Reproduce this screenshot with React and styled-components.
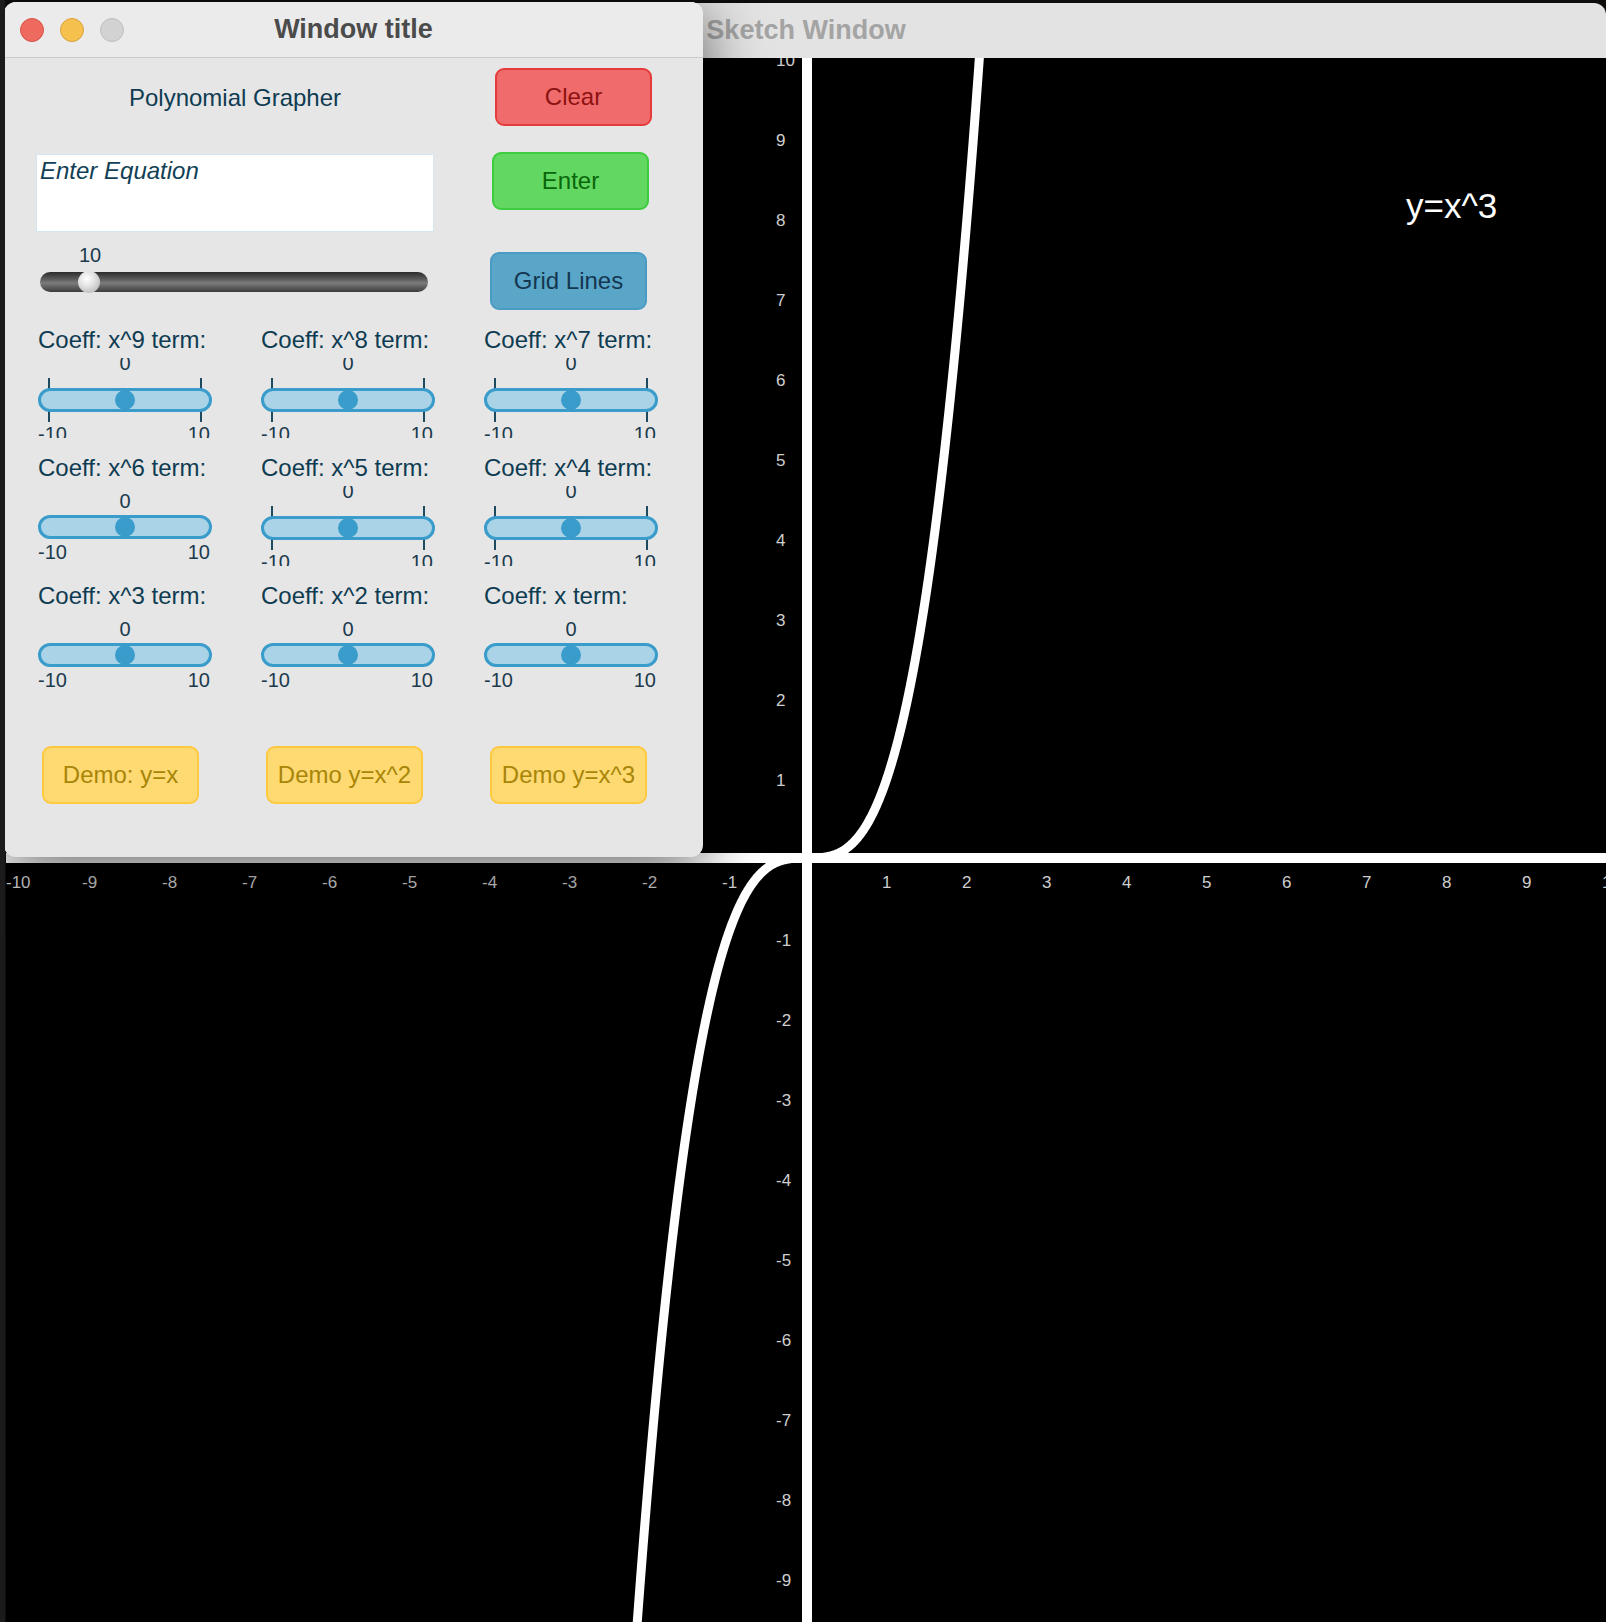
import React from 'react';
import styled, { createGlobalStyle } from 'styled-components';

const GlobalStyle = createGlobalStyle`
  html, body {
    margin: 0;
    padding: 0;
    background: #0e0d0c;
    overflow: hidden;
  }
  body {
    font-family: "Liberation Sans", Arial, sans-serif;
  }
`;

// desktop with two overlapping windows
const Desktop = styled.div`
  position: relative;
  width: 1606px;
  height: 1622px;
  overflow: hidden;
  background: #0e0d0c;
  border-left: 5px solid #1b1b1b;
  box-sizing: border-box;
`;

const SketchWindow = styled.div`
  position: absolute;
  left: 1px;
  top: 3px;
  width: 1600px;
  height: 1660px;
  border-radius: 12px 12px 0 0;
  overflow: hidden;
  background: #000;
`;

const SketchTitleBar = styled.div`
  height: 55px;
  background: #e3e3e3;
  display: flex;
  align-items: center;
  justify-content: center;
  font-weight: bold;
  font-size: 27px;
  color: #a4a4a4;
`;

const ControlWindow = styled.div`
  position: absolute;
  left: -1px;
  top: 2px;
  width: 699px;
  height: 855px;
  border-radius: 12px;
  overflow: hidden;
  background: #e6e6e6;
  box-shadow: 0 12px 60px rgba(0, 0, 0, 0.6);
  z-index: 2;
`;

const TitleBar = styled.div`
  height: 55px;
  background: #ebebeb;
  border-bottom: 1px solid #cbcbcb;
  display: grid;
  grid-template-columns: 1fr auto 1fr;
  align-items: center;
`;

const Lights = styled.div`
  display: flex;
  gap: 16px;
  padding-left: 16px;
`;

const Light = styled.span`
  width: 24px;
  height: 24px;
  border-radius: 50%;
  box-sizing: border-box;
  background: ${(p) => p.$fill};
  border: 1px solid ${(p) => p.$edge};
`;

const WindowTitle = styled.div`
  font-weight: bold;
  font-size: 27px;
  color: #4b4b4b;
`;

const Body = styled.div`
  padding: 10px 0 0 32px;
`;

const TopRow = styled.div`
  display: flex;
  align-items: flex-start;
  gap: 58px;
`;

const LeftColumn = styled.div`
  width: 398px;
  display: flex;
  flex-direction: column;
`;

const AppTitle = styled.div`
  margin-top: 14px;
  line-height: 32px;
  font-size: 24px;
  text-align: center;
  color: #0f3c52;
`;

const EquationInput = styled.textarea`
  margin-top: 40px;
  width: 398px;
  height: 78px;
  box-sizing: border-box;
  border: 1px solid #d3e6f1;
  background: #fff;
  padding: 2px 3px;
  resize: none;
  outline: none;
  font-family: "Liberation Sans", Arial, sans-serif;
  font-style: italic;
  font-size: 24px;
  line-height: 28px;
  color: #123f55;
  &::placeholder {
    color: #123f55;
    opacity: 1;
  }
`;

const RangeValue = styled.div`
  margin-top: 12px;
  padding-left: 43px;
  font-size: 20px;
  line-height: 22px;
  color: #1b3a4e;
`;

const DarkTrack = styled.div`
  position: relative;
  margin: 6px 0 0 4px;
  width: 388px;
  height: 20px;
  border-radius: 10px;
  background: linear-gradient(#2c2c2c 0%, #5a5a5a 35%, #7c7c7c 55%, #3c3c3c 100%);
`;

const DarkKnob = styled.span`
  position: absolute;
  top: -1px;
  left: ${(p) => p.$left}px;
  width: 22px;
  height: 22px;
  border-radius: 50%;
  background: radial-gradient(circle at 40% 35%, #ffffff 0%, #e2e2e2 40%, #a9a9a9 100%);
`;

const RightColumn = styled.div`
  display: flex;
  flex-direction: column;
`;

const Button = styled.button`
  width: 157px;
  height: 58px;
  margin-top: ${(p) => p.$top || 0}px;
  margin-left: ${(p) => p.$shift || 0}px;
  box-sizing: border-box;
  border-radius: 9px;
  border: 2px solid ${(p) => p.$edge};
  background: ${(p) => p.$fill};
  color: ${(p) => p.$ink};
  font-family: "Liberation Sans", Arial, sans-serif;
  font-size: 24px;
  padding: 0;
  cursor: pointer;
`;

const CoeffGrid = styled.div`
  margin: 16px 0 0 2px;
  display: grid;
  grid-template-columns: repeat(3, 174px);
  column-gap: 49px;
  row-gap: 16px;
`;

const Cell = styled.div`
  display: flex;
  flex-direction: column;
  gap: 4px;
`;

const CellLabel = styled.div`
  font-size: 24px;
  line-height: 28px;
  white-space: nowrap;
  color: #0f3c52;
`;

const SliderClip = styled.div`
  height: 80px;
  overflow: hidden;
  display: flex;
  flex-direction: column;
  justify-content: center;
`;

const SliderStack = styled.div`
  display: flex;
  flex-direction: column;
  flex-shrink: 0;
  gap: ${(p) => (p.$ticks ? '14px' : '3px')};
`;

const SliderValue = styled.div`
  height: 22px;
  line-height: 22px;
  font-size: 20px;
  text-align: center;
  color: #1b3a4e;
`;

const TrackWrap = styled.div`
  position: relative;
  height: 24px;
  margin-bottom: ${(p) => (p.$ticks ? '11px' : '2px')};
`;

const Tick = styled.span`
  position: absolute;
  top: -10px;
  width: 2px;
  height: 44px;
  background: #1d4a5e;
  ${(p) => (p.$side === 'left' ? 'left: 10px;' : 'right: 10px;')}
`;

const Track = styled.div`
  position: relative;
  height: 24px;
  box-sizing: border-box;
  border: 3px solid #3a9ccb;
  border-radius: 12px;
  background: #aad3e7;
`;

const Knob = styled.span`
  position: absolute;
  top: 50%;
  left: 50%;
  width: 20px;
  height: 20px;
  margin: -10px 0 0 -10px;
  border-radius: 50%;
  background: #3a9ccb;
`;

const RangeLabels = styled.div`
  height: 22px;
  line-height: 22px;
  font-size: 20px;
  display: flex;
  justify-content: space-between;
  padding-right: 2px;
  color: #1b3a4e;
`;

const DemoRow = styled.div`
  margin: 52px 0 0 6px;
  display: grid;
  grid-template-columns: repeat(3, 157px);
  column-gap: 67px;
`;

const coeffs = [
  { label: 'Coeff: x^9 term:', ticks: true },
  { label: 'Coeff: x^8 term:', ticks: true },
  { label: 'Coeff: x^7 term:', ticks: true },
  { label: 'Coeff: x^6 term:', ticks: false },
  { label: 'Coeff: x^5 term:', ticks: true },
  { label: 'Coeff: x^4 term:', ticks: true },
  { label: 'Coeff: x^3 term:', ticks: false },
  { label: 'Coeff: x^2 term:', ticks: false },
  { label: 'Coeff: x term:', ticks: false },
];

const yellow = { $fill: '#ffd972', $edge: '#ffc93f', $ink: '#a88608' };

const CoeffSlider = ({ label, ticks }) => (
  <Cell>
    <CellLabel>{label}</CellLabel>
    <SliderClip>
      <SliderStack $ticks={ticks}>
        <SliderValue>0</SliderValue>
        <TrackWrap $ticks={ticks}>
          {ticks && <Tick $side="left" />}
          {ticks && <Tick $side="right" />}
          <Track>
            <Knob />
          </Track>
        </TrackWrap>
      </SliderStack>
      <RangeLabels>
        <span>-10</span>
        <span>10</span>
      </RangeLabels>
    </SliderClip>
  </Cell>
);

// graph is 1600x1600, origin in the middle, 80px per unit
const OX = 801;
const OY = 800;
const UNIT = 80;

const curve = () => {
  const pts = [];
  for (let i = 0; i <= 440; i++) {
    const x = -2.2 + i * 0.01;
    pts.push(`${(OX + UNIT * x).toFixed(1)},${(OY - UNIT * x * x * x).toFixed(1)}`);
  }
  return 'M' + pts.join(' L');
};

const steps = [];
for (let k = -10; k <= 10; k++) if (k !== 0) steps.push(k);

const Graph = () => (
  <svg width="1600" height="1600" viewBox="0 0 1600 1600" style={{ display: 'block' }}>
    <rect width="1600" height="1600" fill="#000" />
    <g fill="#cfcfcf" fontFamily='"Liberation Sans", Arial, sans-serif' fontSize="17">
      {steps.map((k) => (
        <text key={'x' + k} x={Math.max(OX + UNIT * k - 5, 0)} y={OY + 30}>
          {k}
        </text>
      ))}
      {steps.map((k) => (
        <text key={'y' + k} x={OX - 31} y={OY - UNIT * k + 8}>
          {k}
        </text>
      ))}
    </g>
    <path d={curve()} fill="none" stroke="#fff" strokeWidth="9" />
    <line x1={OX} y1="0" x2={OX} y2="1600" stroke="#fff" strokeWidth="10" />
    <line x1="0" y1={OY} x2="1600" y2={OY} stroke="#fff" strokeWidth="10" />
    <text x="1400" y="160" fill="#fff" fontFamily='"Liberation Sans", Arial, sans-serif' fontSize="35">
      y=x^3
    </text>
  </svg>
);

export default function App() {
  return (
    <Desktop>
      <GlobalStyle />
      <SketchWindow>
        <SketchTitleBar>Sketch Window</SketchTitleBar>
        <Graph />
      </SketchWindow>

      <ControlWindow>
        <TitleBar>
          <Lights>
            <Light $fill="#ee6a5f" $edge="#d5554a" />
            <Light $fill="#f6c04f" $edge="#d9a43c" />
            <Light $fill="#d2d2d2" $edge="#bfbfbf" />
          </Lights>
          <WindowTitle>Window title</WindowTitle>
          <span />
        </TitleBar>

        <Body>
          <TopRow>
            <LeftColumn>
              <AppTitle>Polynomial Grapher</AppTitle>
              <EquationInput placeholder="Enter Equation" />
              <RangeValue>10</RangeValue>
              <DarkTrack>
                <DarkKnob $left={38} />
              </DarkTrack>
            </LeftColumn>
            <RightColumn>
              <Button $shift={3} $fill="#f06b6b" $edge="#e63b3b" $ink="#8c1212">
                Clear
              </Button>
              <Button $top={26} $fill="#62d862" $edge="#3dcc3d" $ink="#0a660a">
                Enter
              </Button>
              <Button $top={42} $shift={-2} $fill="#5aa6c8" $edge="#4a9bc3" $ink="#143650">
                Grid Lines
              </Button>
            </RightColumn>
          </TopRow>

          <CoeffGrid>
            {coeffs.map((c) => (
              <CoeffSlider key={c.label} label={c.label} ticks={c.ticks} />
            ))}
          </CoeffGrid>

          <DemoRow>
            <Button {...yellow}>Demo: y=x</Button>
            <Button {...yellow}>Demo y=x^2</Button>
            <Button {...yellow}>Demo y=x^3</Button>
          </DemoRow>
        </Body>
      </ControlWindow>
    </Desktop>
  );
}
